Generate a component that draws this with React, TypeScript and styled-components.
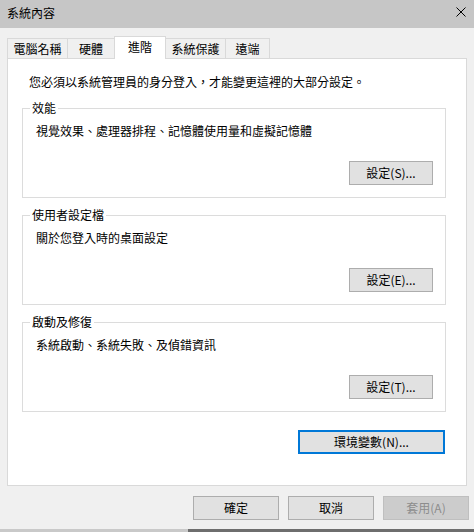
import React from "react";
import styled, { createGlobalStyle } from "styled-components";

const Global = createGlobalStyle`
  html, body { margin: 0; padding: 0; background: #f0f0f0; }
  body { font-family: "Noto Sans CJK TC", "Noto Sans", sans-serif; font-size: 12px; color: #000; }
  * { box-sizing: border-box; }
`;

const Window = styled.div`
  width: 474px;
  height: 532px;
  display: flex;
  flex-direction: column;
  background: #f0f0f0;
  overflow: hidden;
`;

const TitleBar = styled.div`
  height: 28px;
  flex: none;
  background: #c6c6c6;
  display: flex;
  align-items: center;
  justify-content: space-between;
  padding: 0 8px 2px 7px;
  line-height: 16px;
`;

const CloseIcon = styled.svg`
  width: 10px;
  height: 10px;
  margin-top: -2px;
`;

const TabStrip = styled.div`
  display: flex;
  align-items: flex-end;
  height: 22px;
  margin: 8px 0 0 7px;
`;

const Tab = styled.div<{ $w: number; $active?: boolean }>`
  width: ${(p) => p.$w}px;
  height: ${(p) => (p.$active ? 23 : 20)}px;
  margin-bottom: ${(p) => (p.$active ? -1 : 0)}px;
  background: ${(p) => (p.$active ? "#ffffff" : "#f0f0f0")};
  border: 1px solid #d9d9d9;
  border-bottom: none;
  display: flex;
  justify-content: center;
  padding-top: ${(p) => (p.$active ? 2 : 2)}px;
  line-height: 16px;
  position: ${(p) => (p.$active ? "relative" : "static")};
  z-index: ${(p) => (p.$active ? 1 : 0)};
  & + & { margin-left: -1px; }
`;

const Panel = styled.div`
  width: 460px;
  height: 428px;
  margin-left: 7px;
  background: #ffffff;
  border: 1px solid #d9d9d9;
  padding-top: 15px;
  display: flex;
  flex-direction: column;
`;

const Intro = styled.div`
  line-height: 16px;
  margin-left: 21px;
`;

const Groups = styled.div`
  display: flex;
  flex-direction: column;
  gap: 17px;
  margin: 18px 0 0 14px;
  width: 424px;
`;

const Group = styled.div`
  position: relative;
  height: 90px;
  border: 1px solid #dcdcdc;
  display: flex;
  flex-direction: column;
  padding: 14px 12px 0 13px;
`;

const Legend = styled.div`
  position: absolute;
  top: -9px;
  left: 7px;
  padding: 0 2px;
  background: #ffffff;
  line-height: 16px;
`;

const Desc = styled.div`
  line-height: 16px;
`;

const ButtonRow = styled.div`
  display: flex;
  justify-content: flex-end;
  margin-top: 22px;
`;

const EnvRow = styled.div`
  display: flex;
  justify-content: flex-end;
  width: 424px;
  margin: 18px 0 0 14px;
  padding-right: 1px;
`;

const Btn = styled.button<{ $w: number; $variant?: "default" | "disabled" }>`
  width: ${(p) => p.$w}px;
  height: 24px;
  padding: 0;
  font-family: inherit;
  font-size: 12px;
  line-height: 16px;
  color: ${(p) => (p.$variant === "disabled" ? "#8d8d8d" : "#000")};
  background: ${(p) => (p.$variant === "disabled" ? "#cccccc" : "#e1e1e1")};
  border: ${(p) =>
    p.$variant === "default"
      ? "2px solid #0078d7"
      : p.$variant === "disabled"
      ? "1px solid #bfbfbf"
      : "1px solid #adadad"};
  display: flex;
  align-items: center;
  justify-content: center;
`;

const Footer = styled.div`
  display: flex;
  justify-content: flex-end;
  gap: 9px;
  margin-top: 10px;
  padding-right: 5px;
`;

const Spacer = styled.div`
  flex: 1;
`;

const BottomEdge = styled.div`
  height: 3px;
  flex: none;
  display: flex;
`;

const EdgePart = styled.div<{ $w?: number; $dark?: boolean }>`
  ${(p) => (p.$w ? `width: ${p.$w}px;` : "flex: 1;")}
  background: ${(p) => (p.$dark ? "#6e6e6e" : "#c9c9c9")};
`;

const tabs = [
  { label: "電腦名稱", w: 61 },
  { label: "硬體", w: 48 },
  { label: "進階", w: 52, active: true },
  { label: "系統保護", w: 61 },
  { label: "遠端", w: 45 },
];

const groups = [
  { title: "效能", desc: "視覺效果、處理器排程、記憶體使用量和虛擬記憶體", btn: "設定(S)..." },
  { title: "使用者設定檔", desc: "關於您登入時的桌面設定", btn: "設定(E)..." },
  { title: "啟動及修復", desc: "系統啟動、系統失敗、及偵錯資訊", btn: "設定(T)..." },
];

export default function App() {
  return (
    <>
      <Global />
      <Window>
        <TitleBar>
          <span>系統內容</span>
          <CloseIcon viewBox="0 0 10 10">
            <path d="M0.5 0.5 L9.5 9.5 M9.5 0.5 L0.5 9.5" stroke="#000" strokeWidth="1" fill="none" />
          </CloseIcon>
        </TitleBar>
        <TabStrip>
          {tabs.map((t) => (
            <Tab key={t.label} $w={t.w} $active={t.active}>
              {t.label}
            </Tab>
          ))}
        </TabStrip>
        <Panel>
          <Intro>您必須以系統管理員的身分登入，才能變更這裡的大部分設定。</Intro>
          <Groups>
            {groups.map((g) => (
              <Group key={g.title}>
                <Legend>{g.title}</Legend>
                <Desc>{g.desc}</Desc>
                <ButtonRow>
                  <Btn $w={84}>{g.btn}</Btn>
                </ButtonRow>
              </Group>
            ))}
          </Groups>
          <EnvRow>
            <Btn $w={147} $variant="default">環境變數(N)...</Btn>
          </EnvRow>
        </Panel>
        <Footer>
          <Btn $w={86}>確定</Btn>
          <Btn $w={86}>取消</Btn>
          <Btn $w={86} $variant="disabled">套用(A)</Btn>
        </Footer>
        <Spacer />
        <BottomEdge>
          <EdgePart $w={188} />
          <EdgePart $dark />
        </BottomEdge>
      </Window>
    </>
  );
}
